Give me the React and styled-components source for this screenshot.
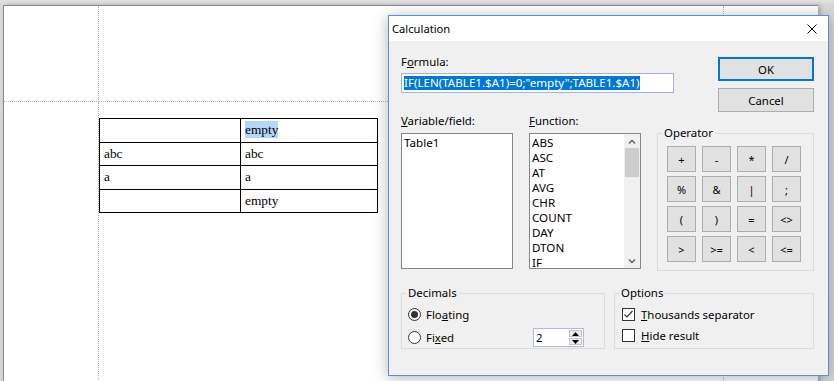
import React from 'react'
import styled, { createGlobalStyle } from 'styled-components'

const GlobalStyle = createGlobalStyle`
  html, body { margin: 0; padding: 0; }
  body { background: #d6d6d6; overflow: hidden; }
`

const uiFont = `"Noto Sans", "Segoe UI", sans-serif`

const Workspace = styled.div`
  position: relative;
  width: 834px;
  height: 381px;
  overflow: hidden;
  box-sizing: border-box;
  padding: 5px 0 0 3px;
  background: linear-gradient(#e2e2e2, #d8d8d8 5px, #d6d6d6);
`

const Sheet = styled.div`
  width: 814px;
  height: 420px;
  background: #fff;
  border-left: 1px solid #8a8a8a;
  border-top: 1px solid #8a8a8a;
  box-shadow: 2px 0 4px rgba(0, 0, 0, 0.22);
  display: grid;
  grid-template-columns: 95px 625px 1fr;
  grid-template-rows: 96px 1fr;
`

const Guide = styled.div`
  box-sizing: border-box;
  border-right: ${p => (p.$right ? '1px dotted #b4b4b4' : 'none')};
  border-bottom: ${p => (p.$bottom ? '1px dotted #b4b4b4' : 'none')};
`

const DocTable = styled.table`
  border-collapse: collapse;
  table-layout: fixed;
  width: 278px;
  margin-top: 16px;
  font-family: "Liberation Serif", "Times New Roman", serif;
  font-size: 13.33px;
  color: #000;

  td {
    border: 1px solid #000;
    height: 22.5px;
    padding: 0 0 0 4px;
    vertical-align: middle;
    white-space: nowrap;
  }
`

const Marked = styled.span`
  background: #b5d6f6;
  padding: 1px 0;
`

const Dialog = styled.div`
  position: absolute;
  left: 388px;
  top: 15px;
  width: 439px;
  height: 359px;
  border: 1px solid #5a8fd0;
  background: #f0f0f0;
  box-shadow: 0 2px 14px rgba(0, 0, 0, 0.3);
  font-family: ${uiFont};
  font-size: 11.4px;
  color: #000;
  display: flex;
  flex-direction: column;
`

const TitleBar = styled.div`
  height: 25px;
  background: #fff;
  display: flex;
  align-items: center;
  justify-content: space-between;
  padding-left: 3px;
  font-size: 11.2px;
`

const CloseBox = styled.div`
  width: 32px;
  height: 25px;
  display: flex;
  align-items: center;
  justify-content: center;
`

const Body = styled.div`
  padding: 13px 14px 0 12px;
  display: flex;
  flex-direction: column;
`

const TopRow = styled.div`
  display: flex;
  justify-content: space-between;
`

const Column = styled.div`
  display: flex;
  flex-direction: column;
  width: ${p => p.$w}px;
`

const Label = styled.div`
  line-height: 15px;
  margin-bottom: ${p => p.$gap || 4}px;
  white-space: nowrap;
`

const U = styled.span`
  text-decoration: underline;
  text-underline-offset: 1px;
`

const FormulaBox = styled.div`
  box-sizing: border-box;
  width: 273px;
  height: 20px;
  border: 1px solid #a5b5cf;
  background: #fff;
  display: flex;
  align-items: center;
  padding-left: 2px;
  white-space: nowrap;
  overflow: hidden;
  font-size: 11.6px;
`

const Selected = styled.span`
  background: #0078d7;
  color: #fff;
  line-height: 14px;
`

const ButtonCol = styled.div`
  display: flex;
  flex-direction: column;
  gap: 7px;
  margin-top: 3px;
  width: 96px;
`

const PushButton = styled.div`
  box-sizing: border-box;
  height: 24px;
  background: #e1e1e1;
  border: ${p => (p.$default ? '2px solid #0078d7' : '1px solid #adadad')};
  display: flex;
  align-items: center;
  justify-content: center;
`

const MidRow = styled.div`
  display: flex;
  gap: 16px;
  margin-top: 1px;
  align-items: flex-start;
`

const ListBox = styled.div`
  box-sizing: border-box;
  height: 136px;
  border: 1px solid #828790;
  background: #fff;
  display: flex;
  overflow: hidden;
`

const Items = styled.div`
  flex: 1;
  padding: 1px 2px;
  font-size: 11.6px;
`

const Item = styled.div`
  line-height: 15px;
  white-space: nowrap;
`

const ScrollBar = styled.div`
  width: 16px;
  background: #f0f0f0;
  display: flex;
  flex-direction: column;
`

const ScrollArrow = styled.div`
  height: 14px;
  display: flex;
  align-items: center;
  justify-content: center;
`

const ScrollTrack = styled.div`
  flex: 1;
  padding: 0 1px;
`

const Thumb = styled.div`
  height: 29px;
  background: #cdcdcd;
`

const Group = styled.fieldset`
  margin: ${p => p.$top || 0}px 0 0 0;
  padding: 0;
  border: 1px solid #dcdcdc;
  width: ${p => p.$w}px;
  box-sizing: border-box;
  min-width: 0;

  legend {
    margin-left: 4px;
    padding: 0 2px;
    line-height: 14px;
  }
`

const OpGrid = styled.div`
  display: grid;
  grid-template-columns: repeat(4, 29px);
  grid-auto-rows: 26px;
  column-gap: 6px;
  row-gap: 4px;
  padding: 6px 12px 8px 9px;
`

const OpButton = styled.div`
  box-sizing: border-box;
  background: #e1e1e1;
  border: 1px solid #adadad;
  display: flex;
  align-items: center;
  justify-content: center;
  font-size: 11px;
`

const BottomRow = styled.div`
  display: flex;
  gap: 9px;
  margin-top: 15px;
`

const GroupBody = styled.div`
  display: flex;
  flex-direction: column;
  gap: ${p => p.$gap || 0}px;
  padding: 4px ${p => p.$right || 0}px 0 ${p => p.$left}px;
`

const OptionRow = styled.div`
  height: 21px;
  display: flex;
  align-items: center;
  gap: ${p => p.$gap}px;
  white-space: nowrap;
`

const RadioDot = styled.span`
  box-sizing: border-box;
  width: 13px;
  height: 13px;
  border-radius: 50%;
  border: 1px solid #333;
  background: #fff;
  display: flex;
  align-items: center;
  justify-content: center;

  &::after {
    content: '';
    width: 7px;
    height: 7px;
    border-radius: 50%;
    background: ${p => (p.$checked ? '#333' : 'transparent')};
  }
`

const CheckBox = styled.span`
  box-sizing: border-box;
  width: 13px;
  height: 13px;
  border: 1px solid #333;
  background: #fff;
  display: flex;
  align-items: center;
  justify-content: center;
`

const Spacer = styled.span`
  flex: 1;
`

const SpinBox = styled.div`
  box-sizing: border-box;
  width: 51px;
  height: 19px;
  border: 1px solid #abbcd6;
  background: #fff;
  display: flex;
  align-items: stretch;
`

const SpinValue = styled.span`
  flex: 1;
  padding-left: 2px;
  line-height: 17px;
`

const SpinButtons = styled.div`
  width: 13px;
  display: flex;
  flex-direction: column;
  gap: 1px;
  padding: 1px 1px 1px 0;
`

const SpinButton = styled.div`
  flex: 1;
  background: #ececec;
  border: 1px solid #c4c4c4;
  display: flex;
  align-items: center;
  justify-content: center;
`

const functions = ['ABS', 'ASC', 'AT', 'AVG', 'CHR', 'COUNT', 'DAY', 'DTON', 'IF']
const operators = ['+', '-', '*', '/', '%', '&', '|', ';', '(', ')', '=', '<>', '>', '>=', '<', '<=']
const rows = [
  ['', 'empty', true],
  ['abc', 'abc'],
  ['a', 'a'],
  ['', 'empty'],
]

const Chevron = ({ up }) => (
  <svg width="8" height="5" viewBox="0 0 8 5">
    <polyline
      points={up ? '1,4.5 4,1.5 7,4.5' : '1,0.5 4,3.5 7,0.5'}
      fill="none"
      stroke="#606060"
      strokeWidth="1.4"
    />
  </svg>
)

const Triangle = ({ up }) => (
  <svg width="7" height="4" viewBox="0 0 7 4">
    <polygon points={up ? '0,4 3.5,0 7,4' : '0,0 3.5,4 7,0'} fill="#000" />
  </svg>
)

const App = () => {
  return (
    <>
      <GlobalStyle />
      <Workspace>
        <Sheet>
          <Guide $right $bottom />
          <Guide $right $bottom />
          <Guide $bottom />
          <Guide $right />
          <Guide $right>
            <DocTable>
              <colgroup>
                <col style={{ width: 141 }} />
                <col style={{ width: 137 }} />
              </colgroup>
              <tbody>
                {rows.map(([a, b, mark], i) => (
                  <tr key={i}>
                    <td>{a}</td>
                    <td>{mark ? <Marked>{b}</Marked> : b}</td>
                  </tr>
                ))}
              </tbody>
            </DocTable>
          </Guide>
          <Guide />
        </Sheet>

        <Dialog>
          <TitleBar>
            <span>Calculation</span>
            <CloseBox>
              <svg width="10" height="10" viewBox="0 0 10 10">
                <path d="M0.5 0.5 L9.5 9.5 M9.5 0.5 L0.5 9.5" stroke="#000" strokeWidth="1" />
              </svg>
            </CloseBox>
          </TitleBar>
          <Body>
            <TopRow>
              <Column $w={273}>
                <Label>F<U>o</U>rmula:</Label>
                <FormulaBox>
                  <Selected>IF(LEN(TABLE1.$A1)=0;"empty";TABLE1.$A1)</Selected>
                </FormulaBox>
              </Column>
              <ButtonCol>
                <PushButton $default>OK</PushButton>
                <PushButton>Cancel</PushButton>
              </ButtonCol>
            </TopRow>

            <MidRow>
              <Column $w={112}>
                <Label $gap={5}><U>V</U>ariable/field:</Label>
                <ListBox>
                  <Items>
                    <Item>Table1</Item>
                  </Items>
                </ListBox>
              </Column>
              <Column $w={112}>
                <Label $gap={5}><U>F</U>unction:</Label>
                <ListBox>
                  <Items>
                    {functions.map(f => (
                      <Item key={f}>{f}</Item>
                    ))}
                  </Items>
                  <ScrollBar>
                    <ScrollArrow><Chevron up /></ScrollArrow>
                    <ScrollTrack>
                      <Thumb />
                    </ScrollTrack>
                    <ScrollArrow><Chevron /></ScrollArrow>
                  </ScrollBar>
                </ListBox>
              </Column>
              <Group $w={157} $top={13}>
                <legend>Operator</legend>
                <OpGrid>
                  {operators.map(op => (
                    <OpButton key={op}>{op}</OpButton>
                  ))}
                </OpGrid>
              </Group>
            </MidRow>

            <BottomRow>
              <Group $w={204}>
                <legend>Decimals</legend>
                <GroupBody $left={6} $right={20} $gap={2}>
                  <OptionRow $gap={5}>
                    <RadioDot $checked />
                    <span>Flo<U>a</U>ting</span>
                  </OptionRow>
                  <OptionRow $gap={5}>
                    <RadioDot />
                    <span>Fi<U>x</U>ed</span>
                    <Spacer />
                    <SpinBox>
                      <SpinValue>2</SpinValue>
                      <SpinButtons>
                        <SpinButton><Triangle up /></SpinButton>
                        <SpinButton><Triangle /></SpinButton>
                      </SpinButtons>
                    </SpinBox>
                  </OptionRow>
                </GroupBody>
              </Group>
              <Group $w={200}>
                <legend>Options</legend>
                <GroupBody $left={7}>
                  <OptionRow $gap={6}>
                    <CheckBox>
                      <svg width="11" height="11" viewBox="0 0 11 11">
                        <polyline points="1.5,5.5 4,8 9.5,2" fill="none" stroke="#333" strokeWidth="1.2" />
                      </svg>
                    </CheckBox>
                    <span><U>T</U>housands separator</span>
                  </OptionRow>
                  <OptionRow $gap={6}>
                    <CheckBox />
                    <span><U>H</U>ide result</span>
                  </OptionRow>
                </GroupBody>
              </Group>
            </BottomRow>
          </Body>
        </Dialog>
      </Workspace>
    </>
  )
}

export default App
